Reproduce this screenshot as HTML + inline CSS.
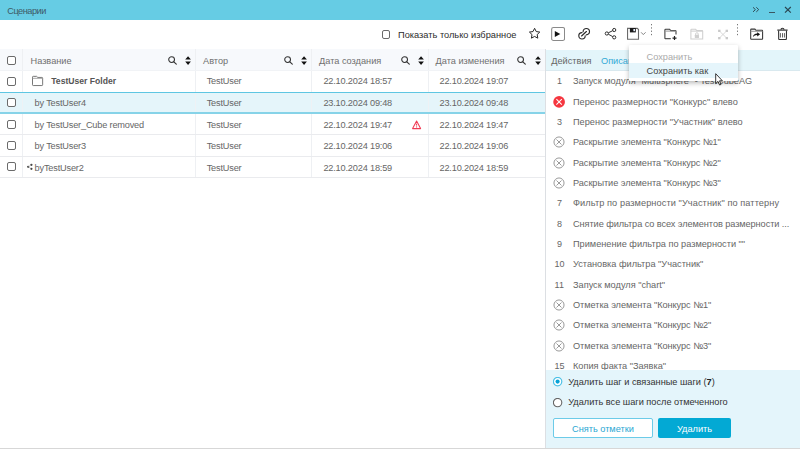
<!DOCTYPE html>
<html><head><meta charset="utf-8"><style>
html,body{margin:0;padding:0;}
body{width:800px;height:449px;position:relative;overflow:hidden;background:#fff;font-family:"Liberation Sans", sans-serif;}
</style></head><body>
<div style="position:absolute;left:0px;top:0px;width:800px;height:19.6px;background:#66cce4"></div>
<div style="position:absolute;left:7.3px;top:6px;font-size:9.2px;line-height:10px;color:#3e5a66;font-weight:normal;white-space:nowrap;letter-spacing:-0.5px">Сценарии</div>
<svg style="position:absolute;left:752px;top:6px;" width="8" height="7" viewBox="0 0 8 7"><path d="M1 1.3 L3.4 3.6 L1 5.9 M4.3 1.3 L6.7 3.6 L4.3 5.9" fill="none" stroke="#2f4b56" stroke-width="1"/></svg>
<div style="position:absolute;left:768.5px;top:11.6px;width:6.4px;height:1.25px;background:#3a5661"></div>
<svg style="position:absolute;left:784px;top:6px;" width="8" height="8" viewBox="0 0 8 8"><path d="M1 1 L6.8 6.6 M6.8 1 L1 6.6" fill="none" stroke="#2a4651" stroke-width="1.15"/></svg>
<div style="position:absolute;left:381.8px;top:30.3px;width:8.5px;height:8.5px;box-sizing:border-box;border:1.3px solid #6b6b6b;border-radius:2px;background:#fff"></div>
<div style="position:absolute;left:398px;top:30px;font-size:9.25px;line-height:10px;color:#2c2c2c;font-weight:normal;white-space:nowrap;">Показать только избранное</div>
<svg style="position:absolute;left:526px;top:25px;" width="18" height="18" viewBox="0 0 18 18"><path d="M8.60 3.30 L10.19 6.57 L13.78 7.07 L11.17 9.58 L11.80 13.16 L8.60 11.45 L5.40 13.16 L6.03 9.58 L3.42 7.07 L7.01 6.57 Z" fill="none" stroke="#2a2a2a" stroke-width="1" stroke-linejoin="round"/></svg>
<svg style="position:absolute;left:551px;top:27px;" width="14" height="14" viewBox="0 0 14 14"><rect x="0.65" y="0.55" width="12.9" height="12.9" rx="1.8" fill="none" stroke="#8a8a8a" stroke-width="1.1"/><path d="M3.8 4 L9.3 6.95 L3.8 9.9 Z" fill="#111"/></svg>
<svg style="position:absolute;left:576px;top:26px;" width="16" height="16" viewBox="0 0 16 16"><g fill="none" stroke="#2a2a2a" stroke-width="1.15" stroke-linecap="round"><path d="M9.2 9.8 A3.2 3.2 0 1 1 6 6.6"/><path d="M7.1 5.7 A3.2 3.2 0 1 1 10.3 8.9"/><path d="M5.6 10 L10.4 5.5"/></g></svg>
<svg style="position:absolute;left:602px;top:26px;" width="16" height="16" viewBox="0 0 16 16"><g fill="none" stroke="#2f2f2f" stroke-width="1"><circle cx="4.8" cy="7.5" r="1.6"/><circle cx="12.2" cy="4" r="1.6"/><circle cx="12.2" cy="11.35" r="1.6"/><path d="M6.3 6.8 L10.7 4.7 M6.3 8.2 L10.7 10.6"/></g></svg>
<svg style="position:absolute;left:624px;top:26px;" width="24" height="16" viewBox="0 0 24 16"><path d="M3.55 2.35 H13.3 L14.5 3.5 V13.2 H3.55 Z" fill="none" stroke="#6a6a6a" stroke-width="1.1"/><rect x="5.9" y="2" width="5.9" height="4.4" fill="#1a1a1a"/><rect x="9.4" y="3" width="1.6" height="2.2" fill="#e8f0ff"/><path d="M17.1 6.3 L19.3 8.6 L21.6 6.3" fill="none" stroke="#777" stroke-width="0.9"/></svg>
<svg style="position:absolute;left:651px;top:23px;" width="1" height="14" viewBox="0 0 1 14"><path d="M0.5 1 V13" stroke="#777" stroke-width="1" stroke-dasharray="1.3 2"/></svg>
<svg style="position:absolute;left:737px;top:23px;" width="1" height="14" viewBox="0 0 1 14"><path d="M0.5 1 V13" stroke="#777" stroke-width="1" stroke-dasharray="1.3 2"/></svg>
<svg style="position:absolute;left:661px;top:26px;" width="20" height="16" viewBox="0 0 20 16"><g fill="none" stroke="#3a3a3a" stroke-width="1.05"><path d="M3.9 12.7 V3.9 Q3.9 3.25 4.6 3.25 H8.6 L9.8 4.6 H14.3 Q15 4.6 15 5.3 V8.4"/><path d="M3.9 12.7 H9.8"/><path d="M3.9 5.1 H14.8" stroke="#9a9a9a"/></g><path d="M13.5 10.1 V14.1 M11.5 12.1 H15.5" stroke="#222" stroke-width="1.2"/></svg>
<svg style="position:absolute;left:687px;top:26px;" width="20" height="16" viewBox="0 0 20 16"><g fill="none" stroke="#cfcfcf" stroke-width="1.05"><path d="M3.9 12.9 V3.9 Q3.9 3.2 4.6 3.2 H8.6 L9.8 4.6 H15 Q15.7 4.6 15.7 5.3 V12.9 Z"/><path d="M3.9 5.1 H15.6"/><path d="M8.6 9 V8 a1.3 1.3 0 0 1 2.6 0 V9" stroke-width="0.9"/></g><rect x="7.8" y="8.8" width="4.2" height="3.3" rx="0.5" fill="#cfcfcf"/></svg>
<svg style="position:absolute;left:714px;top:26px;" width="18" height="16" viewBox="0 0 18 16"><g stroke="#d4d4d4" stroke-width="0.9" fill="none"><path d="M6.2 5.8 L11.8 11.2 M11.8 5.8 L6.2 11.2"/></g><g fill="#c9c9c9"><rect x="4.1" y="3.7" width="2.4" height="2.3"/><rect x="11.6" y="3.7" width="2.4" height="2.3"/><rect x="4.1" y="11" width="2.4" height="2.3"/><rect x="11.6" y="11" width="2.4" height="2.3"/></g></svg>
<svg style="position:absolute;left:747px;top:25px;" width="20" height="17" viewBox="0 0 20 17"><g fill="none" stroke="#333" stroke-width="1.05"><path d="M3.7 13.7 V4.7 Q3.7 4.1 4.3 4.1 H7.9 L8.9 5.3 H15 Q15.6 5.3 15.6 5.9 V13.7 Q15.6 14.3 15 14.3 H4.3 Q3.7 14.3 3.7 13.7 Z"/><path d="M3.7 6.3 H15.5" stroke="#9a9a9a"/></g><path d="M5.9 12 Q6.4 8.7 10.2 8.5 V7.2 L13.1 9.3 L10.2 11.4 V10.1 Q7.6 10 5.9 12 Z" fill="#111"/></svg>
<svg style="position:absolute;left:774px;top:25px;" width="18" height="17" viewBox="0 0 18 17"><g fill="none" stroke="#333" stroke-width="1.1"><path d="M3.3 5.1 H13.6" stroke-width="1.2"/><path d="M7 4.8 Q7 3.2 8.5 3.2 Q10 3.2 10 4.8"/><path d="M4.6 5.6 L4.7 13.9 Q4.7 14.5 5.3 14.5 H11.8 Q12.4 14.5 12.4 13.9 L12.5 5.6"/></g><g stroke="#555" stroke-width="0.9"><path d="M6.45 8.1 V12.5 M8.5 8.1 V12.5 M10.45 8.1 V12.5"/></g></svg>
<div style="position:absolute;left:0px;top:49px;width:545px;height:21px;background:#f7f9fc"></div>
<div style="position:absolute;left:0px;top:92px;width:545px;height:22px;background:#e5f5fa;border-top:1.3px solid #5ec6e2;border-bottom:2px solid #86d3e8;box-sizing:border-box"></div>
<div style="position:absolute;left:22.3px;top:49px;width:1.2px;height:43px;background:#eef0f3"></div>
<div style="position:absolute;left:22.3px;top:93.3px;width:1.2px;height:18.6px;background:#eef2f5"></div>
<div style="position:absolute;left:22.3px;top:114px;width:1.2px;height:63px;background:#eef0f3"></div>
<div style="position:absolute;left:195px;top:49px;width:1.2px;height:43px;background:#eef0f3"></div>
<div style="position:absolute;left:195px;top:93.3px;width:1.2px;height:18.6px;background:#eef2f5"></div>
<div style="position:absolute;left:195px;top:114px;width:1.2px;height:63px;background:#eef0f3"></div>
<div style="position:absolute;left:311px;top:49px;width:1.2px;height:43px;background:#eef0f3"></div>
<div style="position:absolute;left:311px;top:93.3px;width:1.2px;height:18.6px;background:#eef2f5"></div>
<div style="position:absolute;left:311px;top:114px;width:1.2px;height:63px;background:#eef0f3"></div>
<div style="position:absolute;left:427.5px;top:49px;width:1.2px;height:43px;background:#eef0f3"></div>
<div style="position:absolute;left:427.5px;top:93.3px;width:1.2px;height:18.6px;background:#eef2f5"></div>
<div style="position:absolute;left:427.5px;top:114px;width:1.2px;height:63px;background:#eef0f3"></div>
<div style="position:absolute;left:0px;top:134.3px;width:545px;height:1px;background:#eaebee"></div>
<div style="position:absolute;left:0px;top:156px;width:545px;height:1px;background:#eaebee"></div>
<div style="position:absolute;left:0px;top:177px;width:545px;height:1px;background:#eaebee"></div>
<div style="position:absolute;left:0px;top:69.5px;width:545px;height:1px;background:#f1f3f6"></div>
<div style="position:absolute;left:7px;top:56px;width:9px;height:9px;box-sizing:border-box;border:1.3px solid #6b6b6b;border-radius:2px;background:#fff"></div>
<div style="position:absolute;left:30.5px;top:56px;font-size:9.2px;line-height:10px;color:#6f6f6f;font-weight:normal;white-space:nowrap;">Название</div>
<div style="position:absolute;left:203px;top:56px;font-size:9.2px;line-height:10px;color:#6f6f6f;font-weight:normal;white-space:nowrap;">Автор</div>
<div style="position:absolute;left:319px;top:56px;font-size:9.2px;line-height:10px;color:#6f6f6f;font-weight:normal;white-space:nowrap;">Дата создания</div>
<div style="position:absolute;left:435.5px;top:56px;font-size:9.2px;line-height:10px;color:#6f6f6f;font-weight:normal;white-space:nowrap;">Дата изменения</div>
<svg style="position:absolute;left:167.9px;top:55.6px;" width="10" height="10" viewBox="0 0 10 10"><circle cx="3.6" cy="3.6" r="2.9" fill="none" stroke="#333" stroke-width="1.05"/><path d="M5.8 5.8 L8.3 8.2" stroke="#333" stroke-width="1.15" stroke-linecap="round"/></svg>
<svg style="position:absolute;left:185.3px;top:55.9px;" width="7" height="10" viewBox="0 0 7 10"><path d="M0.2 3.6 L3.05 0.2 L5.9 3.6 Z M0.2 5.4 L3.05 8.9 L5.9 5.4 Z" fill="#111"/></svg>
<svg style="position:absolute;left:283.9px;top:55.6px;" width="10" height="10" viewBox="0 0 10 10"><circle cx="3.6" cy="3.6" r="2.9" fill="none" stroke="#333" stroke-width="1.05"/><path d="M5.8 5.8 L8.3 8.2" stroke="#333" stroke-width="1.15" stroke-linecap="round"/></svg>
<svg style="position:absolute;left:301.29999999999995px;top:55.9px;" width="7" height="10" viewBox="0 0 7 10"><path d="M0.2 3.6 L3.05 0.2 L5.9 3.6 Z M0.2 5.4 L3.05 8.9 L5.9 5.4 Z" fill="#111"/></svg>
<svg style="position:absolute;left:400.9px;top:55.6px;" width="10" height="10" viewBox="0 0 10 10"><circle cx="3.6" cy="3.6" r="2.9" fill="none" stroke="#333" stroke-width="1.05"/><path d="M5.8 5.8 L8.3 8.2" stroke="#333" stroke-width="1.15" stroke-linecap="round"/></svg>
<svg style="position:absolute;left:418.29999999999995px;top:55.9px;" width="7" height="10" viewBox="0 0 7 10"><path d="M0.2 3.6 L3.05 0.2 L5.9 3.6 Z M0.2 5.4 L3.05 8.9 L5.9 5.4 Z" fill="#111"/></svg>
<svg style="position:absolute;left:517.1px;top:55.6px;" width="10" height="10" viewBox="0 0 10 10"><circle cx="3.6" cy="3.6" r="2.9" fill="none" stroke="#333" stroke-width="1.05"/><path d="M5.8 5.8 L8.3 8.2" stroke="#333" stroke-width="1.15" stroke-linecap="round"/></svg>
<svg style="position:absolute;left:534.5px;top:55.9px;" width="7" height="10" viewBox="0 0 7 10"><path d="M0.2 3.6 L3.05 0.2 L5.9 3.6 Z M0.2 5.4 L3.05 8.9 L5.9 5.4 Z" fill="#111"/></svg>
<div style="position:absolute;left:7px;top:76.7px;width:9px;height:9px;box-sizing:border-box;border:1.3px solid #6b6b6b;border-radius:2px;background:#fff"></div>
<svg style="position:absolute;left:31px;top:75px;" width="13" height="12" viewBox="0 0 13 12"><path d="M1.5 2.1 Q1.5 1.35 2.25 1.35 H5.6 L6.8 2.45 H10.9 Q11.65 2.45 11.65 3.2 V9.8 Q11.65 10.55 10.9 10.55 H2.25 Q1.5 10.55 1.5 9.8 Z" fill="none" stroke="#707070" stroke-width="0.95"/><path d="M1.5 3.3 H11.6" stroke="#9a9a9a" stroke-width="0.9"/></svg>
<div style="position:absolute;left:51.25px;top:76px;font-size:8.6px;line-height:10px;color:#555;font-weight:bold;white-space:nowrap;">TestUser Folder</div>
<div style="position:absolute;left:206.7px;top:76px;font-size:9.2px;line-height:10px;color:#666;font-weight:normal;white-space:nowrap;letter-spacing:-0.18px">TestUser</div>
<div style="position:absolute;left:323.4px;top:76px;font-size:9.2px;line-height:10px;color:#666;font-weight:normal;white-space:nowrap;letter-spacing:-0.18px">22.10.2024 18:57</div>
<div style="position:absolute;left:439.5px;top:76px;font-size:9.2px;line-height:10px;color:#666;font-weight:normal;white-space:nowrap;letter-spacing:-0.18px">22.10.2024 19:07</div>
<div style="position:absolute;left:7px;top:98.45px;width:9px;height:9px;box-sizing:border-box;border:1.3px solid #6b6b6b;border-radius:2px;background:#fff"></div>
<div style="position:absolute;left:34.6px;top:98px;font-size:9.2px;line-height:10px;color:#666;font-weight:normal;white-space:nowrap;letter-spacing:-0.18px">by TestUser4</div>
<div style="position:absolute;left:206.7px;top:98px;font-size:9.2px;line-height:10px;color:#666;font-weight:normal;white-space:nowrap;letter-spacing:-0.18px">TestUser</div>
<div style="position:absolute;left:323.4px;top:98px;font-size:9.2px;line-height:10px;color:#666;font-weight:normal;white-space:nowrap;letter-spacing:-0.18px">23.10.2024 09:48</div>
<div style="position:absolute;left:439.5px;top:98px;font-size:9.2px;line-height:10px;color:#666;font-weight:normal;white-space:nowrap;letter-spacing:-0.18px">23.10.2024 09:48</div>
<div style="position:absolute;left:7px;top:119.7px;width:9px;height:9px;box-sizing:border-box;border:1.3px solid #6b6b6b;border-radius:2px;background:#fff"></div>
<div style="position:absolute;left:34.6px;top:120px;font-size:9.2px;line-height:10px;color:#666;font-weight:normal;white-space:nowrap;letter-spacing:-0.18px">by TestUser_Cube removed</div>
<div style="position:absolute;left:206.7px;top:120px;font-size:9.2px;line-height:10px;color:#666;font-weight:normal;white-space:nowrap;letter-spacing:-0.18px">TestUser</div>
<div style="position:absolute;left:323.4px;top:120px;font-size:9.2px;line-height:10px;color:#666;font-weight:normal;white-space:nowrap;letter-spacing:-0.18px">22.10.2024 19:47</div>
<div style="position:absolute;left:439.5px;top:120px;font-size:9.2px;line-height:10px;color:#666;font-weight:normal;white-space:nowrap;letter-spacing:-0.18px">22.10.2024 19:47</div>
<div style="position:absolute;left:7px;top:140.95px;width:9px;height:9px;box-sizing:border-box;border:1.3px solid #6b6b6b;border-radius:2px;background:#fff"></div>
<div style="position:absolute;left:34.6px;top:141px;font-size:9.2px;line-height:10px;color:#666;font-weight:normal;white-space:nowrap;letter-spacing:-0.18px">by TestUser3</div>
<div style="position:absolute;left:206.7px;top:141px;font-size:9.2px;line-height:10px;color:#666;font-weight:normal;white-space:nowrap;letter-spacing:-0.18px">TestUser</div>
<div style="position:absolute;left:323.4px;top:141px;font-size:9.2px;line-height:10px;color:#666;font-weight:normal;white-space:nowrap;letter-spacing:-0.18px">22.10.2024 19:06</div>
<div style="position:absolute;left:439.5px;top:141px;font-size:9.2px;line-height:10px;color:#666;font-weight:normal;white-space:nowrap;letter-spacing:-0.18px">22.10.2024 19:06</div>
<div style="position:absolute;left:7px;top:162.2px;width:9px;height:9px;box-sizing:border-box;border:1.3px solid #6b6b6b;border-radius:2px;background:#fff"></div>
<div style="position:absolute;left:34.6px;top:163px;font-size:9.2px;line-height:10px;color:#666;font-weight:normal;white-space:nowrap;letter-spacing:-0.18px">byTestUser2</div>
<div style="position:absolute;left:206.7px;top:163px;font-size:9.2px;line-height:10px;color:#666;font-weight:normal;white-space:nowrap;letter-spacing:-0.18px">TestUser</div>
<div style="position:absolute;left:323.4px;top:163px;font-size:9.2px;line-height:10px;color:#666;font-weight:normal;white-space:nowrap;letter-spacing:-0.18px">22.10.2024 18:59</div>
<div style="position:absolute;left:439.5px;top:163px;font-size:9.2px;line-height:10px;color:#666;font-weight:normal;white-space:nowrap;letter-spacing:-0.18px">22.10.2024 18:59</div>
<svg style="position:absolute;left:26px;top:163px;" width="7" height="8" viewBox="0 0 7 8"><g fill="#3a3a3a"><circle cx="2.2" cy="3.8" r="1.1"/><circle cx="5.4" cy="1.8" r="1.1"/><circle cx="5.4" cy="5.8" r="1.1"/></g><path d="M2.2 3.8 L5.4 1.8 M2.2 3.8 L5.4 5.8" stroke="#999" stroke-width="0.5"/></svg>
<svg style="position:absolute;left:412px;top:119.5px;" width="10" height="10" viewBox="0 0 10 10"><path d="M4.6 1 L8.6 8.6 H0.6 Z" fill="none" stroke="#f03c55" stroke-width="1.05" stroke-linejoin="round"/><path d="M4.6 3.6 V5.6" stroke="#f03c55" stroke-width="1"/><circle cx="4.6" cy="6.9" r="0.6" fill="#f03c55"/></svg>
<div style="position:absolute;left:545px;top:49px;width:255px;height:398.5px;background:#fff"></div>
<div style="position:absolute;left:545px;top:49px;width:1px;height:398.5px;background:#dcdfe3"></div>
<div style="position:absolute;left:546px;top:49.5px;width:254px;height:21px;background:#e3f5fa;border-bottom:1px solid #d9e9ef;box-sizing:border-box;height:21px"></div>
<div style="position:absolute;left:551.25px;top:56px;font-size:9.2px;line-height:10px;color:#666;font-weight:normal;white-space:nowrap;">Действия</div>
<div style="position:absolute;left:601px;top:56px;font-size:9.2px;line-height:10px;color:#33aad6;font-weight:normal;white-space:nowrap;">Описание</div>
<div style="position:absolute;left:557.1px;top:76px;font-size:9px;line-height:10px;color:#666;font-weight:normal;white-space:nowrap;">1</div>
<div style="position:absolute;left:573px;top:76px;font-size:9.2px;line-height:10px;color:#666;font-weight:normal;white-space:nowrap;letter-spacing:0px">Запуск модуля "Multisphere" - TestCubeAG</div>
<svg style="position:absolute;left:553px;top:95.55000000000001px;" width="12" height="12" viewBox="0 0 12 12"><circle cx="6.1" cy="5.9" r="5.85" fill="#f5363f"/><path d="M3.4 3.2 L8.8 8.6 M8.8 3.2 L3.4 8.6" stroke="#fff" stroke-width="1.05"/></svg>
<div style="position:absolute;left:573px;top:97px;font-size:9.2px;line-height:10px;color:#666;font-weight:normal;white-space:nowrap;letter-spacing:0px">Перенос размерности "Конкурс" влево</div>
<div style="position:absolute;left:557.1px;top:117px;font-size:9px;line-height:10px;color:#666;font-weight:normal;white-space:nowrap;">3</div>
<div style="position:absolute;left:573px;top:117px;font-size:9.2px;line-height:10px;color:#666;font-weight:normal;white-space:nowrap;letter-spacing:0px">Перенос размерности "Участник" влево</div>
<svg style="position:absolute;left:553px;top:136.25px;" width="12" height="12" viewBox="0 0 12 12"><circle cx="6" cy="6" r="5.05" fill="none" stroke="#9a9a9a" stroke-width="1"/><path d="M3.5 3.5 L8.5 8.5 M8.5 3.5 L3.5 8.5" stroke="#8f8f8f" stroke-width="0.9"/></svg>
<div style="position:absolute;left:573px;top:137px;font-size:9.2px;line-height:10px;color:#666;font-weight:normal;white-space:nowrap;letter-spacing:-0.05px">Раскрытие элемента "Конкурс №1"</div>
<svg style="position:absolute;left:553px;top:156.60000000000002px;" width="12" height="12" viewBox="0 0 12 12"><circle cx="6" cy="6" r="5.05" fill="none" stroke="#9a9a9a" stroke-width="1"/><path d="M3.5 3.5 L8.5 8.5 M8.5 3.5 L3.5 8.5" stroke="#8f8f8f" stroke-width="0.9"/></svg>
<div style="position:absolute;left:573px;top:158px;font-size:9.2px;line-height:10px;color:#666;font-weight:normal;white-space:nowrap;letter-spacing:-0.05px">Раскрытие элемента "Конкурс №2"</div>
<svg style="position:absolute;left:553px;top:176.95px;" width="12" height="12" viewBox="0 0 12 12"><circle cx="6" cy="6" r="5.05" fill="none" stroke="#9a9a9a" stroke-width="1"/><path d="M3.5 3.5 L8.5 8.5 M8.5 3.5 L3.5 8.5" stroke="#8f8f8f" stroke-width="0.9"/></svg>
<div style="position:absolute;left:573px;top:178px;font-size:9.2px;line-height:10px;color:#666;font-weight:normal;white-space:nowrap;letter-spacing:-0.05px">Раскрытие элемента "Конкурс №3"</div>
<div style="position:absolute;left:557.1px;top:198px;font-size:9px;line-height:10px;color:#666;font-weight:normal;white-space:nowrap;">7</div>
<div style="position:absolute;left:573px;top:198px;font-size:9.2px;line-height:10px;color:#666;font-weight:normal;white-space:nowrap;letter-spacing:0.09px">Фильтр по размерности "Участник" по паттерну</div>
<div style="position:absolute;left:557.1px;top:219px;font-size:9px;line-height:10px;color:#666;font-weight:normal;white-space:nowrap;">8</div>
<div style="position:absolute;left:573px;top:219px;font-size:9.2px;line-height:10px;color:#666;font-weight:normal;white-space:nowrap;letter-spacing:-0.075px">Снятие фильтра со всех элементов размерности ...</div>
<div style="position:absolute;left:557.1px;top:239px;font-size:9px;line-height:10px;color:#666;font-weight:normal;white-space:nowrap;">9</div>
<div style="position:absolute;left:573px;top:239px;font-size:9.2px;line-height:10px;color:#666;font-weight:normal;white-space:nowrap;letter-spacing:0px">Применение фильтра по размерности ""</div>
<div style="position:absolute;left:554.6px;top:259px;font-size:9px;line-height:10px;color:#666;font-weight:normal;white-space:nowrap;">10</div>
<div style="position:absolute;left:573px;top:259px;font-size:9.2px;line-height:10px;color:#666;font-weight:normal;white-space:nowrap;letter-spacing:0px">Установка фильтра "Участник"</div>
<div style="position:absolute;left:554.6px;top:280px;font-size:9px;line-height:10px;color:#666;font-weight:normal;white-space:nowrap;">11</div>
<div style="position:absolute;left:573px;top:280px;font-size:9.2px;line-height:10px;color:#666;font-weight:normal;white-space:nowrap;letter-spacing:0px">Запуск модуля "chart"</div>
<svg style="position:absolute;left:553px;top:299.05px;" width="12" height="12" viewBox="0 0 12 12"><circle cx="6" cy="6" r="5.05" fill="none" stroke="#9a9a9a" stroke-width="1"/><path d="M3.5 3.5 L8.5 8.5 M8.5 3.5 L3.5 8.5" stroke="#8f8f8f" stroke-width="0.9"/></svg>
<div style="position:absolute;left:573px;top:300px;font-size:9.2px;line-height:10px;color:#666;font-weight:normal;white-space:nowrap;letter-spacing:-0.05px">Отметка элемента "Конкурс №1"</div>
<svg style="position:absolute;left:553px;top:319.40000000000003px;" width="12" height="12" viewBox="0 0 12 12"><circle cx="6" cy="6" r="5.05" fill="none" stroke="#9a9a9a" stroke-width="1"/><path d="M3.5 3.5 L8.5 8.5 M8.5 3.5 L3.5 8.5" stroke="#8f8f8f" stroke-width="0.9"/></svg>
<div style="position:absolute;left:573px;top:320px;font-size:9.2px;line-height:10px;color:#666;font-weight:normal;white-space:nowrap;letter-spacing:-0.05px">Отметка элемента "Конкурс №2"</div>
<svg style="position:absolute;left:553px;top:339.75px;" width="12" height="12" viewBox="0 0 12 12"><circle cx="6" cy="6" r="5.05" fill="none" stroke="#9a9a9a" stroke-width="1"/><path d="M3.5 3.5 L8.5 8.5 M8.5 3.5 L3.5 8.5" stroke="#8f8f8f" stroke-width="0.9"/></svg>
<div style="position:absolute;left:573px;top:341px;font-size:9.2px;line-height:10px;color:#666;font-weight:normal;white-space:nowrap;letter-spacing:-0.05px">Отметка элемента "Конкурс №3"</div>
<div style="position:absolute;left:554.6px;top:361px;font-size:9px;line-height:10px;color:#666;font-weight:normal;white-space:nowrap;">15</div>
<div style="position:absolute;left:573px;top:361px;font-size:9.2px;line-height:10px;color:#666;font-weight:normal;white-space:nowrap;letter-spacing:0px">Копия факта "Заявка"</div>
<div style="position:absolute;left:546px;top:370px;width:254px;height:77.5px;background:#e4f5fb"></div>
<svg style="position:absolute;left:552.5px;top:377.2px;" width="10" height="10" viewBox="0 0 10 10"><circle cx="4.6" cy="4.6" r="4.2" fill="#fff" stroke="#4cc0e6" stroke-width="1.2"/><circle cx="4.6" cy="4.6" r="2.05" fill="#08a2d6"/></svg>
<div style="position:absolute;left:568.2px;top:377px;font-size:9.2px;line-height:10px;color:#333;font-weight:normal;white-space:nowrap;">Удалить шаг и связанные шаги (<b style="color:#222">7</b>)</div>
<svg style="position:absolute;left:552.5px;top:397.5px;" width="10" height="10" viewBox="0 0 10 10"><circle cx="4.6" cy="4.6" r="4.2" fill="#fff" stroke="#666" stroke-width="1.1"/></svg>
<div style="position:absolute;left:568.2px;top:397px;font-size:9.2px;line-height:10px;color:#333;font-weight:normal;white-space:nowrap;">Удалить все шаги после отмеченного</div>
<div style="position:absolute;left:552.5px;top:418px;width:100px;height:20.3px;box-sizing:border-box;background:#fff;border:1px solid #6ccbe8;border-radius:2px"></div>
<div style="position:absolute;left:572px;top:424px;font-size:9.2px;line-height:10px;color:#2ba7d3;font-weight:normal;white-space:nowrap;">Снять отметки</div>
<div style="position:absolute;left:658px;top:418px;width:73.3px;height:20.3px;background:#03a9d4;border-radius:2px"></div>
<div style="position:absolute;left:677px;top:424px;font-size:9.2px;line-height:10px;color:#fff;font-weight:normal;white-space:nowrap;">Удалить</div>
<div style="position:absolute;left:0px;top:447.5px;width:800px;height:1.5px;background:#d7d7d7"></div>
<div style="position:absolute;left:628.7px;top:44.6px;width:109.5px;height:36.6px;background:#fff;box-shadow:0 2px 5px rgba(0,0,0,0.28);border-radius:1px"></div>
<div style="position:absolute;left:628.7px;top:63.2px;width:109.5px;height:15px;background:#e5f5fb"></div>
<div style="position:absolute;left:646.6px;top:52px;font-size:9.2px;line-height:10px;color:#aaa;font-weight:normal;white-space:nowrap;">Сохранить</div>
<div style="position:absolute;left:646.6px;top:66px;font-size:9.2px;line-height:10px;color:#444;font-weight:normal;white-space:nowrap;">Сохранить как</div>
<svg style="position:absolute;left:714.7px;top:72.7px;" width="8" height="13" viewBox="0 0 8 13"><path d="M0.7 0.7 V10.5 L3 8.4 L4.6 12 L6 11.4 L4.5 7.8 L7.4 7.8 Z" fill="#fff" stroke="#222" stroke-width="0.9" stroke-linejoin="round"/></svg>
</body></html>
